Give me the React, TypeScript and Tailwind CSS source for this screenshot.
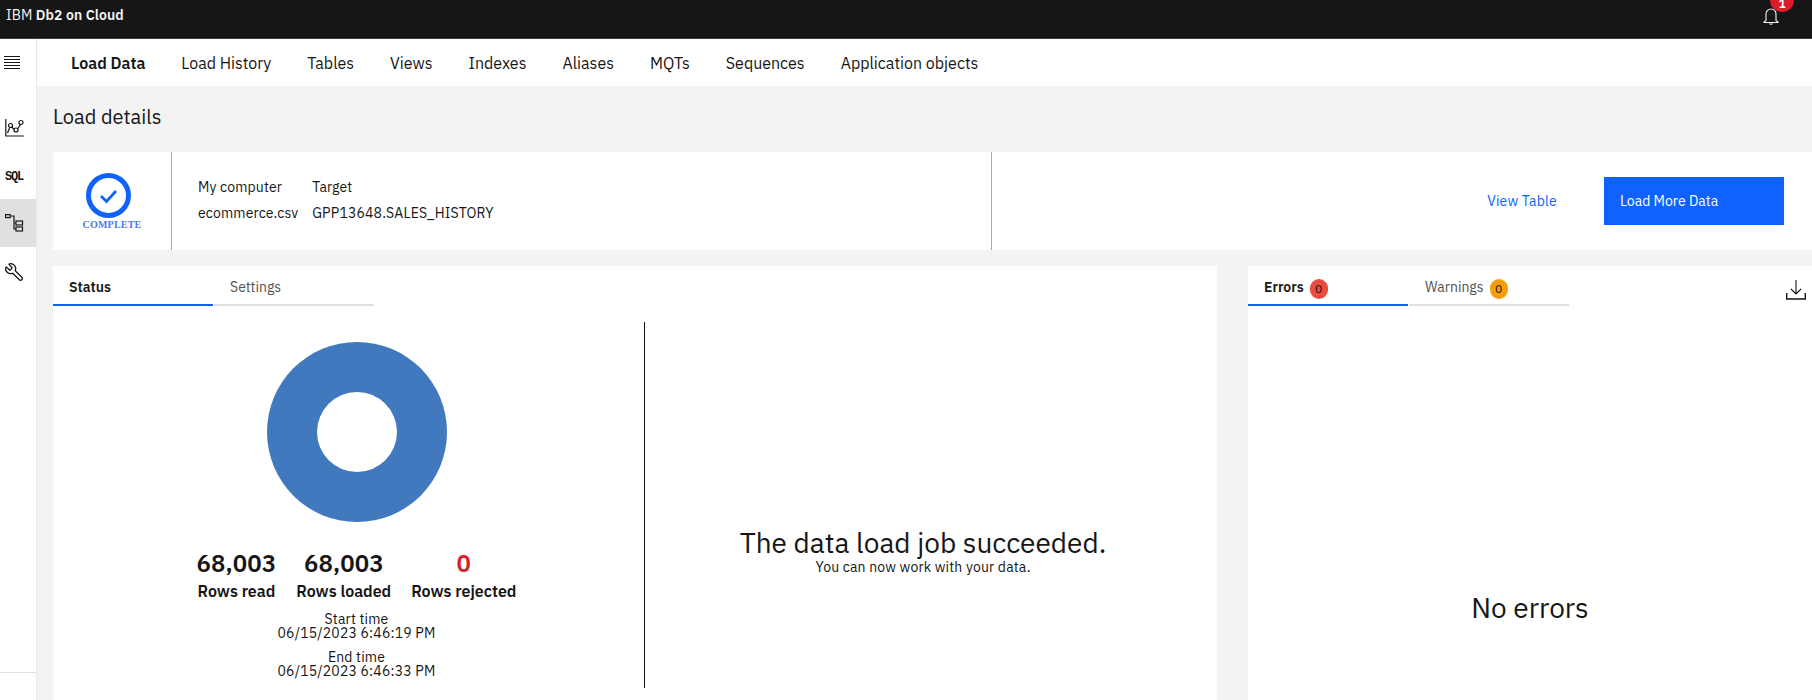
import React from "react";
import { Wrench } from "lucide-react";

const tabs = ["Load Data", "Load History", "Tables", "Views", "Indexes", "Aliases", "MQTs", "Sequences", "Application objects"];

const Stat = ({ value, label, red }: { value: string; label: string; red?: boolean }) => (
  <div className="flex flex-col items-center">
    <p className={`text-[24px] leading-[30px] font-semibold tracking-[0.1px] ${red ? "text-[#da1e28]" : "text-[#161616]"}`}>{value}</p>
    <p className="mt-px text-[16px] leading-[24px] font-semibold text-[#161616]">{label}</p>
  </div>
);

const TabBar = ({ first, second }: { first: React.ReactNode; second: React.ReactNode }) => (
  <div className="flex h-[40px] w-[321px]">
    <div className="flex w-[160px] items-center border-b-2 border-[#0f62fe] pt-[4px] pl-4 text-[14px] font-semibold text-[#161616]">{first}</div>
    <div className="ml-px flex w-[160px] items-center border-b-2 border-[#e0e0e0] pt-[4px] pl-4 text-[14px] text-[#525252]">{second}</div>
  </div>
);

const Sidebar = () => (
  <div className="flex h-full w-[37px] shrink-0 flex-col border-r border-[#e8e8e8] bg-white">
    <div className="flex h-[46px] items-center pl-1">
      <svg width="16" height="13" viewBox="0 0 16 13" stroke="#161616" strokeWidth="1">
        <path d="M0 .5h16M0 3.500h16M0 6.500h16M0 9.500h16M0 12.500h16" />
      </svg>
    </div>
    <div className="mt-[18px] flex h-[48px] items-center pl-[5px]">
      <svg width="19" height="19" viewBox="0 0 19 19" fill="none" stroke="#161616" strokeWidth="1.200">
        <path d="M.8 1v17h18" />
        <path d="M2.500 15 5.500 7.500l5.500 6L16.500 5" />
        <circle cx="5.500" cy="7.500" r="2" fill="#fff" />
        <circle cx="11" cy="12" r="2" fill="#fff" />
        <circle cx="16" cy="4.500" r="2" fill="#fff" />
      </svg>
    </div>
    <div className="flex h-[48px] items-center pt-[3px] pl-[5px] font-['Liberation_Mono',monospace] text-[12px] font-bold tracking-[-1.200px] text-[#161616]">SQL</div>
    <div className="flex h-[48px] items-center bg-[#e0e0e0] pl-[5px]">
      <svg width="19" height="18" viewBox="0 0 19 18" fill="none" stroke="#161616" strokeWidth="1.200">
        <rect x=".6" y=".6" width="4.500" height="3" />
        <rect x="11" y="7" width="6.500" height="4" />
        <rect x="11" y="13" width="6.500" height="4" />
        <path d="M5 2h4v13h2M9 9h2" />
      </svg>
    </div>
    <div className="flex h-[49px] items-center pl-[4px]">
      <Wrench size={20} strokeWidth={1.500} color="#161616" className="-scale-x-100" />
    </div>
    <div className="mt-auto mb-[27px] border-t border-[#e0e0e0]" />
  </div>
);

export default function App() {
  return (
    <div className="flex h-[700px] w-[1812px] flex-col overflow-hidden bg-[#f3f3f3] font-['IBM_Plex_Sans','Noto_Sans',sans-serif] text-[#161616]">
      <header className="flex h-[39px] shrink-0 items-center justify-between border-b border-[#3d3d3d] bg-[#161616] pl-[6px] pr-[33px] text-[14px] text-[#f4f4f4]">
        <p className="-mt-[8px] tracking-[0.1px]">
          IBM <span className="font-semibold">Db2 on Cloud</span>
        </p>
        <div className="relative mt-[7px] self-start">
          <svg width="16" height="18" viewBox="0 0 16 18" fill="none" stroke="#f4f4f4" strokeWidth="1.100">
            <path d="M3 13.500V7a5 5 0 0 1 10 0v6.500l2 1.500v.5H1V15l2-1.500Z" />
            <path d="M6.500 16.500c.5 1 2.500 1 3 0" />
          </svg>
          <span className="absolute -top-[19px] left-[7px] flex h-[24px] w-[24px] items-center justify-center rounded-full bg-[#da1e28] pt-[8px] text-[12px] leading-none font-semibold text-white">1</span>
        </div>
      </header>
      <div className="flex min-h-0 flex-1">
        <Sidebar />
        <main className="min-w-0 flex-1">
          <nav className="flex h-[47px] items-center bg-white pl-[34px] text-[16px]">
            {tabs.map((t, i) => (
              <span key={t} className={`mr-[36px] ${i === 0 ? "font-semibold" : ""}`}>{t}</span>
            ))}
          </nav>
          <div className="pl-[16px]">
            <h1 className="pt-[17px] pb-[21px] text-[20px] leading-[28px]">Load details</h1>
            <section className="flex h-[98px] bg-white">
              <div className="flex w-[119px] shrink-0 flex-col items-center border-r border-[#a8a8a8] pt-[21px]">
                <svg width="45" height="45" viewBox="0 0 45 45" fill="none" className="-ml-[7px]">
                  <circle cx="22.500" cy="22.500" r="20" stroke="#0f62fe" strokeWidth="5" />
                  <path d="M15 23l5.500 5.500L30 18" stroke="#0f62fe" strokeWidth="2.800" />
                </svg>
                <p className="mt-px font-['Liberation_Serif',serif] text-[10px] leading-[11px] font-bold tracking-[0.2px] text-[#4a78f5]">COMPLETE</p>
              </div>
              <div className="flex w-[820px] shrink-0 gap-[14px] border-r border-[#a8a8a8] pt-[22px] pl-[26px] text-[14px] leading-[26px] tracking-[0.15px]">
                <div><p>My computer</p><p>ecommerce.csv</p></div>
                <div><p>Target</p><p>GPP13648.SALES_HISTORY</p></div>
              </div>
              <div className="flex flex-1 items-center justify-end pr-[28px]">
                <span className="text-[14px] tracking-[0.2px] text-[#0f62fe]">View Table</span>
                <span className="ml-[47px] flex h-[48px] w-[180px] items-center bg-[#0f62fe] pl-[16px] text-[14px] text-white">Load More Data</span>
              </div>
            </section>
            <div className="mt-[16px] flex h-[434px]">
              <section className="w-[1164px] shrink-0 bg-white">
                <TabBar first="Status" second="Settings" />
                <div className="mt-[16px] flex">
                  <div className="flex h-[366px] w-[592px] shrink-0 flex-col items-center border-r border-[#161616] pl-[16px]">
                    <div className="mt-[20px] flex h-[180px] w-[180px] items-center justify-center rounded-full bg-[#4179bf]">
                      <div className="h-[80px] w-[80px] rounded-full bg-white" />
                    </div>
                    <div className="mt-[26px] flex gap-[20px]">
                      <Stat value="68,003" label="Rows read" />
                      <Stat value="68,003" label="Rows loaded" />
                      <Stat value="0" label="Rows rejected" red />
                    </div>
                    <div className="mt-[9px] text-center text-[14px] leading-[14px] tracking-[0.16px]">
                      <p>Start time</p>
                      <p>06/15/2023 6:46:19 PM</p>
                      <p className="mt-[10px]">End time</p>
                      <p>06/15/2023 6:46:33 PM</p>
                    </div>
                  </div>
                  <div className="flex flex-1 flex-col items-center pt-[204px] pr-[16px]">
                    <p className="text-[28px] leading-[34px]">The data load job succeeded.</p>
                    <p className="text-[14px] leading-[14px] tracking-[0.16px]">You can now work with your data.</p>
                  </div>
                </div>
              </section>
              <section className="relative ml-[31px] flex-1 bg-white">
                <TabBar
                  first={<>Errors<span className="mt-[3px] ml-[6px] flex h-[20px] w-[18px] items-center justify-center rounded-full bg-[#ea4c3f] text-[12px] font-normal">0</span></>}
                  second={<>Warnings<span className="mt-[3px] ml-[6px] flex h-[20px] w-[18px] items-center justify-center rounded-full bg-[#f59e0b] text-[12px] text-[#161616]">0</span></>}
                />
                <svg width="20" height="20" viewBox="0 0 20 20" fill="none" stroke="#161616" className="absolute top-[14px] right-[6px]">
                  <path d="M10 0v14M5 9l5 5 5-5" strokeWidth="1.100" />
                  <path d="M.7 13v6h18.600v-6" strokeWidth="1.400" />
                </svg>
                <p className="mt-[284px] text-center text-[28px] leading-[36px]">No errors</p>
              </section>
            </div>
          </div>
        </main>
      </div>
    </div>
  );
}
